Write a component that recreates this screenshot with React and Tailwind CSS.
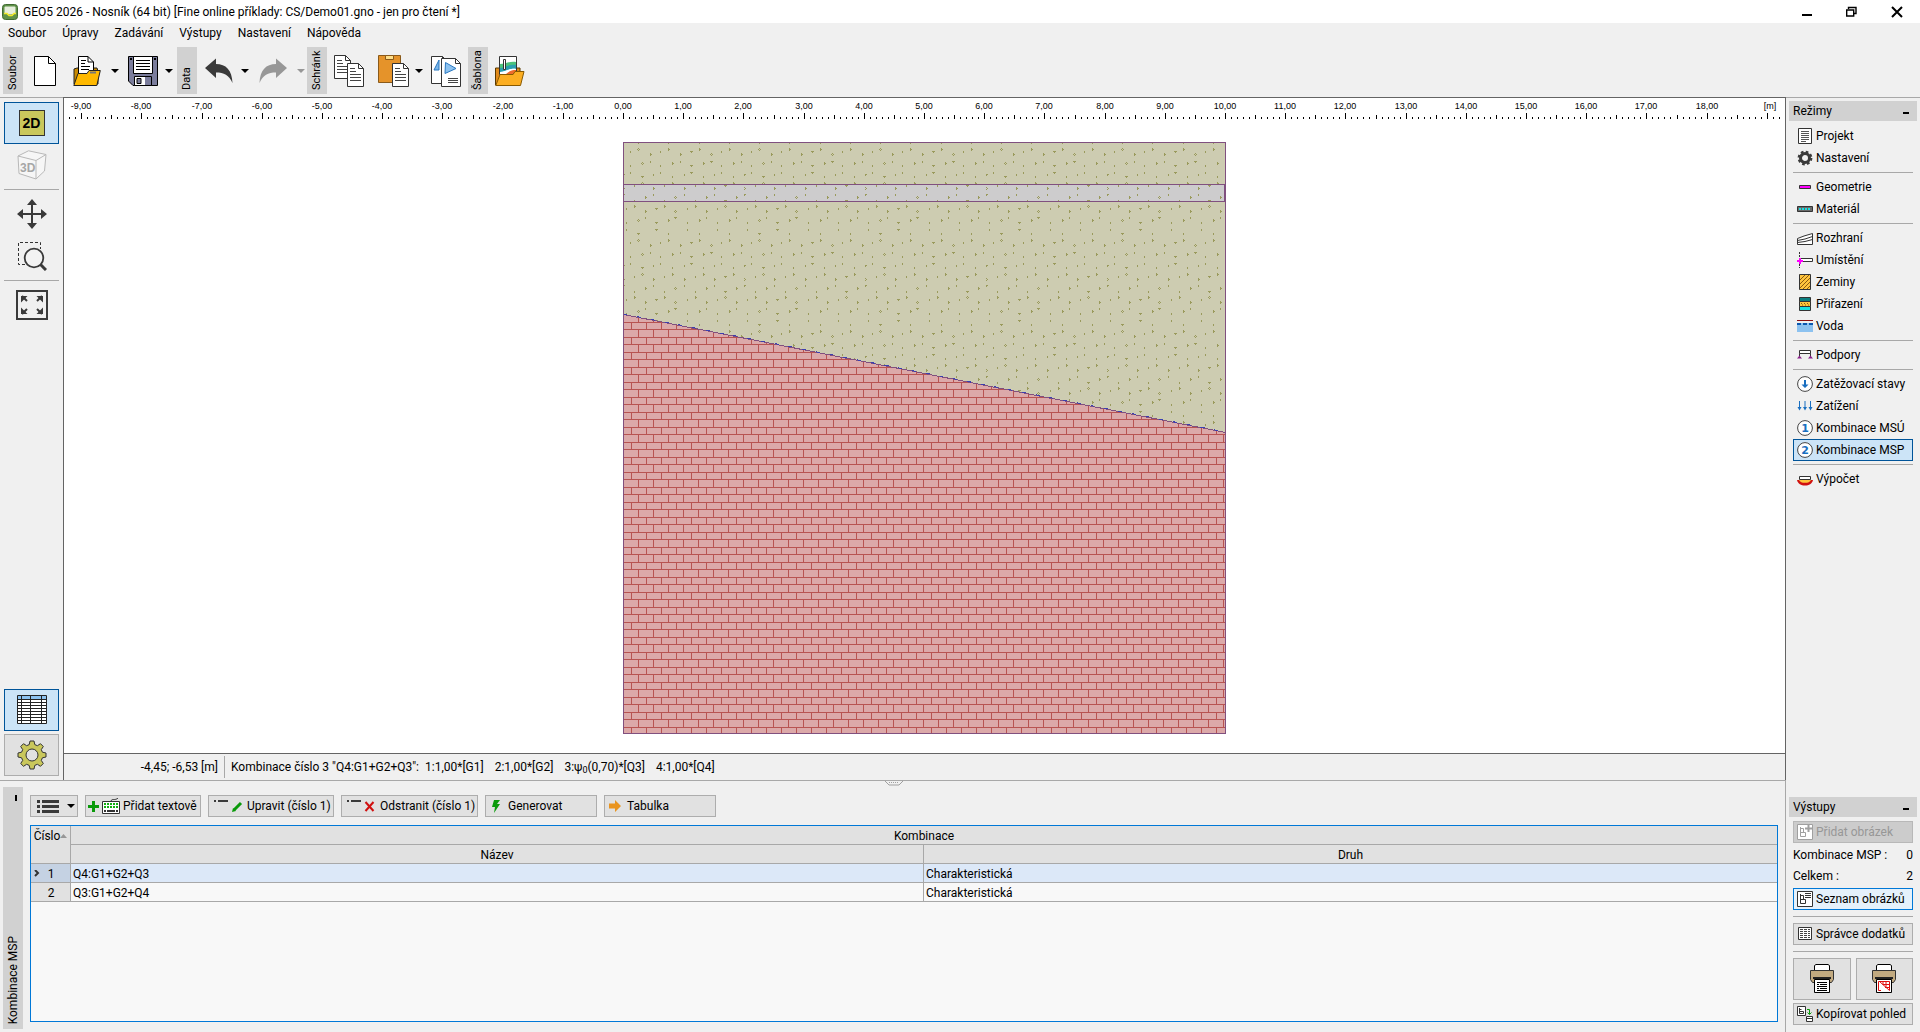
import { useState } from 'react';

const MENU = ['Soubor', 'Úpravy', 'Zadávání', 'Výstupy', 'Nastavení', 'Nápověda'];

// world origin and scale of the 2D view, in canvas pixels
const ORIGIN_X = 559;
const UNIT = 60.2;

// soil hatch, tile 121 x 91: [y, first x, x of the special mark, kind]
const SAND_ROWS = [
  [0, 15, 15, 'tick'], [7, 15, 15, 'stone'], [9, 7, 68, 'tick'], [12, 27, 87, 'stone'],
  [19, 27, 87, 'tick'], [21, 19, 19, 'stone'], [23, 7, 68, 'tick'], [30, 7, 68, 'tick'],
  [32, 0, 0, 'tick'], [34, 19, 19, 'tick'], [41, 19, 19, 'stone'], [43, 11, 102, 'tick'],
  [46, 0, 0, 'stone'], [52, 0, 0, 'tick'], [55, 22, 53, 'stone'], [58, 11, 102, 'tick'],
  [64, 11, 102, 'stone'], [66, 3, 34, 'tick'], [69, 22, 53, 'stone'], [75, 22, 53, 'tick'],
  [78, 15, 15, 'stone'], [80, 3, 34, 'tick'], [87, 3, 34, 'tick'],
];

function sandMark(x, y, kind, special) {
  const px = (dx, dy, w, h) => `M${x + dx} ${y + dy}h${w}v${h}h${-w}z`;
  if (kind === 'tick') {
    return special ? px(-1, 0, 3, 1) + px(0, 1, 1, 1) : px(0, 0, 1, 2);
  }
  return special
    ? px(0, -1, 1, 1) + px(-1, 0, 1, 1) + px(1, 0, 1, 1) + px(0, 1, 1, 1)
    : px(0, -1, 1, 3) + px(1, 0, 1, 1);
}

const SAND_PATH = SAND_ROWS.map(([y, first, specialX, kind]) =>
  [0, 30, 61, 91]
    .map((step) => {
      const x = first + step;
      return sandMark(x, y, kind, Math.abs(x - specialX) < 3);
    })
    .join('')
).join('');

function Icon({ w, h, children, className = '' }) {
  return (
    <svg width={w} height={h} viewBox={`0 0 ${w} ${h}`} fill="none" className={`shrink-0 ${className}`} aria-hidden="true">
      {children}
    </svg>
  );
}

function Page({ x = 0, y = 0, w = 16, h = 23, lines = true }) {
  const f = 5.5;
  return (
    <g transform={`translate(${x} ${y})`}>
      <path d={`M.5 .5H${w - f}L${w - 0.5} ${f}V${h - 0.5}H.5z`} fill="#fff" stroke="#333" />
      <path d={`M${w - f} .5V${f}H${w - 0.5}`} stroke="#333" />
      {lines && <path d={`M3 5.5h5M3 8.5h6M3 11.5h${w - 6}M3 14.5h${w - 6}M3 17.5h${w - 6}`} stroke="#444" />}
    </g>
  );
}

function NewIcon() {
  return (
    <Icon w={22} h={32}>
      <path d="M.5 1.500H14.500L21.500 8.500V30.500H.5z" fill="#fff" stroke="#000" />
      <path d="M14.500 1.500V8.500H21.500" stroke="#000" />
    </Icon>
  );
}

function OpenIcon() {
  return (
    <Icon w={28} h={32}>
      <path d="M1 29V14l3-1h20l1 3v13z" fill="#c98a00" stroke="#222" />
      <path d="M5.500 20V1.500H15L20.500 7V20z" fill="#fff" stroke="#000" />
      <path d="M15 1.500V7h5.500M8 5.500h5M8 8.500h4M8 11.500h9M8 14.500h8" stroke="#000" />
      <path d="M.8 30.500L5 18.500h9l2-3h11.300l-3.500 15z" fill="#ffb900" stroke="#222" />
      <path d="M17 17.500h6" stroke="#777" strokeWidth="2" />
    </Icon>
  );
}

function SaveIcon() {
  return (
    <Icon w={30} h={32}>
      <path d="M.5 1.500h29v29H5L.5 26z" fill="#7b7d9c" stroke="#000" />
      <path d="M5.500 1.500h19v17h-19z" fill="#fff" stroke="#000" />
      <path d="M8 5.500h14M8 8.500h14M8 11.500h14M8 14.500h14" stroke="#000" />
      <path d="M6.500 21.500h17v9h-17z" fill="#fff" stroke="#000" />
      <path d="M9 23.500h4v5H9z" fill="#7b7d9c" stroke="#000" />
      <path d="M17 22h6v8h-6z" fill="#7b7d9c" />
      <path d="M2 3h2v2H2zM26 3h2v2h-2z" fill="#000" />
    </Icon>
  );
}

function UndoIcon({ color = '#3a3a3a', flip }) {
  return (
    <Icon w={28} h={28}>
      <path
        d="M0 11L11 1.500V7C21 7 27 13 27.500 26C24 18 19 15.500 11 15.500V21z"
        fill={color}
        transform={flip ? 'matrix(-1 0 0 1 28 0)' : undefined}
      />
    </Icon>
  );
}

function CopyIcon() {
  return (
    <Icon w={31} h={34}>
      <Page x={0} y={1} w={17} h={24} />
      <Page x={13} y={9} w={17} h={24} />
    </Icon>
  );
}

function PasteIcon() {
  return (
    <Icon w={31} h={34}>
      <path d="M.5 1.500h22v27H.5z" fill="#e5932a" stroke="#8a5a1a" />
      <path d="M7.500 1.500h8v4h-8z" fill="#ffe08a" stroke="#8a5a1a" />
      <Page x={14} y={9} w={17} h={24} />
    </Icon>
  );
}

function CopyDrawingIcon() {
  return (
    <Icon w={31} h={34}>
      <Page x={0} y={2} w={17} h={28} lines={false} />
      <path d="M8 6L3 16h5z" fill="#7ab6ea" stroke="#2a78c0" />
      <Page x={10} y={4} w={20} h={29} lines={false} />
      <path d="M14.500 8.500L25 14.500l-11 5z" fill="#8cc2f0" stroke="#2a78c0" />
      <path d="M17 24.500h10M17 26.500h10M17 28.500h10" stroke="#444" />
    </Icon>
  );
}

function TemplateIcon() {
  return (
    <Icon w={30} h={34}>
      <path d="M.5 31V14h5V31zM20 14h5v8h-5z" fill="#e08a1a" stroke="#5a3a00" />
      <path d="M4.500 2.500h17v18h-17z" fill="#fff" stroke="#333" />
      <path d="M5 10c6 0 9-3 16-2v4c-6-1-9 3-16 3z" fill="#4cc27c" />
      <path d="M5 14c5 0 9-4 16-3v4c-6-1-10 3-16 3z" fill="#2a9fb0" />
      <path d="M5 18c5 0 9-4 16-3v2c-6-1-10 2-16 3z" fill="#fff" />
      <path d="M11 20c3-3 6-4 10-4v4z" fill="#ee6a2c" />
      <path d="M8.500 5.500h2v10h-2z" fill="#fff" stroke="#333" />
      <path d="M.8 31.500L5 20.500h13l2-3h9l-3.500 14z" fill="#fcae22" stroke="#8a5a00" />
    </Icon>
  );
}

function Caret({ color = '#000' }) {
  return (
    <Icon w={8} h={4}>
      <path d="M0 0H8L4 4z" fill={color} />
    </Icon>
  );
}

function GroupLabel({ children }) {
  return (
    <div className="h-[47px] w-5 shrink-0 bg-[#d1d1d1]">
      <span className="flex h-full w-5 rotate-180 items-center whitespace-nowrap pt-1 text-[11px] [writing-mode:vertical-rl]">
        <span className="w-5 leading-5">{children}</span>
      </span>
    </div>
  );
}

function ToolButton({ label, children, className = '' }) {
  return (
    <button type="button" aria-label={label} className={`flex h-[47px] shrink-0 items-center justify-center ${className}`}>
      {children}
    </button>
  );
}

function TitleBar() {
  return (
    <header className="flex h-[23px] items-center bg-white">
      <Icon w={16} h={16} className="ml-[2px] mr-[5px]">
        <rect x=".5" y=".5" width="15" height="15" rx="3" fill="#5f9148" stroke="#3f6b30" />
        <path d="M2.500 3.500q0-1 1-1h9q1 0 1 1V9q-5 3-11 0z" fill="#e6eedc" />
        <path d="M2 9.500h3l2 2h3l2-2h2" stroke="#f2ea2a" strokeWidth="1.500" />
      </Icon>
      <h1 className="flex-1">GEO5 2026 - Nosník (64 bit) [Fine online příklady: CS/Demo01.gno - jen pro čtení *]</h1>
      <button type="button" aria-label="Minimalizovat" className="flex h-full w-[45px] items-center justify-center">
        <Icon w={10} h={11}>
          <path d="M0 9h10" stroke="#000" strokeWidth="2" />
        </Icon>
      </button>
      <button type="button" aria-label="Obnovit" className="flex h-full w-[45px] items-center justify-center">
        <Icon w={11} h={11}>
          <path d="M2.500 3V1.500h7.500v6H8" stroke="#000" strokeWidth="1.400" />
          <path d="M.7 4h7v6h-7z" stroke="#000" strokeWidth="1.400" />
        </Icon>
      </button>
      <button type="button" aria-label="Zavřít" className="flex h-full w-[46px] items-center justify-center">
        <Icon w={12} h={12}>
          <path d="M1 1l10 10M11 1L1 11" stroke="#000" strokeWidth="2" />
        </Icon>
      </button>
    </header>
  );
}

function Toolbar() {
  return (
    <div className="flex items-center pb-[3px] pl-[3px]">
      <GroupLabel>Soubor</GroupLabel>
      <ToolButton label="Nový" className="w-11"><NewIcon /></ToolButton>
      <ToolButton label="Otevřít" className="w-10"><OpenIcon /></ToolButton>
      <ToolButton label="Další možnosti otevření" className="w-4"><Caret /></ToolButton>
      <ToolButton label="Uložit" className="w-10"><SaveIcon /></ToolButton>
      <ToolButton label="Další možnosti uložení" className="mr-[2px] w-3"><Caret /></ToolButton>
      <GroupLabel>Data</GroupLabel>
      <ToolButton label="Zpět" className="w-11"><UndoIcon /></ToolButton>
      <ToolButton label="Seznam kroků zpět" className="w-2"><Caret /></ToolButton>
      <ToolButton label="Znovu" className="w-12"><UndoIcon color="#979797" flip /></ToolButton>
      <ToolButton label="Seznam kroků znovu" className="mr-[2px] w-2"><Caret color="#979797" /></ToolButton>
      <GroupLabel>Schránk</GroupLabel>
      <ToolButton label="Kopírovat" className="w-11"><CopyIcon /></ToolButton>
      <ToolButton label="Vložit" className="w-11"><PasteIcon /></ToolButton>
      <ToolButton label="Další možnosti vložení" className="w-2"><Caret /></ToolButton>
      <ToolButton label="Kopírovat výkres" className="w-[45px] pl-px"><CopyDrawingIcon /></ToolButton>
      <GroupLabel>Šablona</GroupLabel>
      <ToolButton label="Otevřít šablonu" className="w-11"><TemplateIcon /></ToolButton>
    </div>
  );
}

const GEAR_8 =
  'M13 1h4l.8 3.600 2.600 1.100 3.100-2 2.800 2.800-2 3.100 1.100 2.600 3.600.8v4l-3.600.8-1.100 2.600 2 3.100-2.800 2.800-3.100-2-2.600 1.100-.8 3.600h-4l-.8-3.600-2.600-1.100-3.100 2-2.800-2.800 2-3.100-1.100-2.600L1 17v-4l3.600-.8 1.100-2.600-2-3.100 2.800-2.800 3.100 2 2.600-1.100z';

function SideTools({ tableShown, onToggleTable }) {
  return (
    <div className="flex w-[63px] shrink-0 flex-col border-t border-[#a8a8a8] px-1 pb-1 pt-1">
      <button type="button" aria-label="2D" aria-pressed="true" className="flex h-[42px] items-center justify-center border border-[#005499] bg-[#cce4f7]">
        <span className="flex size-[26px] items-center justify-center border border-[#333] bg-[#c9c75c] font-['Liberation_Sans',sans-serif] text-[14px] font-bold">2D</span>
      </button>
      <button type="button" aria-label="3D" disabled className="flex h-[42px] items-center justify-center">
        <Icon w={30} h={30}>
          <path d="M1 6L11.500 .8 29 4.500 27.500 21 19 29 2 23.500z" fill="#f6f6f6" stroke="#b8b8b8" />
          <path d="M1 6l18 4.500L29 4.500M19 10.500V29" stroke="#b8b8b8" />
          <text x="3" y="21.500" fontSize="12" fontWeight="bold" fill="#a6a6a6" fontFamily="Liberation Sans, sans-serif">3D</text>
        </Icon>
      </button>
      <hr className="my-[3px] border-[#a8a8a8]" />
      <button type="button" aria-label="Posun" className="flex h-[42px] items-center justify-center">
        <Icon w={30} h={30}>
          <path d="M15 5v20M5 15h20" stroke="#3a3a3a" strokeWidth="2" />
          <path d="M15 0l5 6H10zM15 30l5-6H10zM0 15l6-5v10zM30 15l-6-5v10z" fill="#3a3a3a" />
        </Icon>
      </button>
      <button type="button" aria-label="Zvětšení oblasti" className="flex h-[42px] items-center justify-center">
        <Icon w={30} h={30}>
          <path d="M8 23.500H1.500v-22h22V8" stroke="#333" strokeDasharray="3 2" />
          <circle cx="17" cy="17" r="9.300" fill="#f3f3f3" stroke="#3a3a3a" strokeWidth="1.800" />
          <path d="M23.500 23.500l5.500 5.500" stroke="#3a3a3a" strokeWidth="3" />
        </Icon>
      </button>
      <hr className="my-[3px] border-[#a8a8a8]" />
      <button type="button" aria-label="Zobrazit vše" className="flex h-[42px] items-center justify-center">
        <Icon w={32} h={30}>
          <path d="M1 1h30v28H1z" stroke="#3a3a3a" strokeWidth="2" />
          <path d="M6 6l5 5M26 6l-5 5M6 24l5-5M26 24l-5-5" stroke="#3a3a3a" strokeWidth="2" />
          <path d="M5 6h6.500L5 12.500zM27 6h-6.500l6.500 6.500zM5 24h6.500L5 17.500zM27 24h-6.500l6.500-6.500z" fill="#3a3a3a" />
        </Icon>
      </button>
      <div className="flex-1" />
      <button
        type="button"
        aria-label="Tabulka"
        aria-pressed={tableShown}
        onClick={onToggleTable}
        className="mb-[3px] flex h-[42px] items-center justify-center border border-[#005499] bg-[#cce4f7]"
      >
        <Icon w={30} h={30}>
          <path d="M.5 .5h29v28H.5z" fill="#fff" stroke="#222" />
          <path d="M1 1h28v3H1z" fill="#8cc2f0" />
          <path d="M0 4.500h30M0 7.500h30M0 10.500h30M0 13.500h30M0 16.500h30M0 19.500h30M0 22.500h30M0 25.500h30M4.500 0v29M13.500 0v29M24.500 0v29" stroke="#222" />
        </Icon>
      </button>
      <button type="button" aria-label="Nastavení zobrazení" className="flex h-[42px] items-center justify-center border border-[#adadad] bg-[#e1e1e1]">
        <Icon w={30} h={30}>
          <path d={GEAR_8} fill="#c9c75c" stroke="#333" strokeLinejoin="round" />
          <circle cx="15" cy="15" r="6" fill="#e1e1e1" stroke="#333" />
        </Icon>
      </button>
    </div>
  );
}

function Ruler() {
  const ticks = [];
  for (let i = -92; i <= 192; i++) {
    const len = i % 10 === 0 ? 6 : i % 5 === 0 ? 4 : 2;
    ticks.push(`M${Math.round(ORIGIN_X + (i * UNIT) / 10) + 0.5} 21v-${len}`);
  }
  const labels = [];
  for (let i = -9; i <= 18; i++) labels.push(i);
  return (
    <g>
      <path d={ticks.join('')} stroke="#000" />
      <g fontFamily="Liberation Sans, sans-serif" fontSize="9" textAnchor="middle" fill="#000">
        {labels.map((n) => (
          <text key={n} x={Math.round(ORIGIN_X + n * UNIT)} y="11">{`${n},00`}</text>
        ))}
        <text x={Math.round(ORIGIN_X + 19 * UNIT) + 3} y="11">[m]</text>
      </g>
    </g>
  );
}

function Canvas() {
  return (
    <svg className="min-h-0 w-full flex-1 bg-white" aria-label="2D pohled">
      <defs>
        <pattern id="sand" x="559" y="44" width="121" height="91" patternUnits="userSpaceOnUse">
          <path d={SAND_PATH} fill="#9a9a5c" shapeRendering="crispEdges" />
        </pattern>
        <pattern id="bricks" x="567" y="224" width="15" height="15" patternUnits="userSpaceOnUse">
          <path d="M0 .5H15M0 7.500H15M.5 1V7M7.500 8V15" stroke="#b85452" shapeRendering="crispEdges" />
        </pattern>
      </defs>
      <Ruler />
      <g shapeRendering="crispEdges">
        <path d="M559 44H1162V335L559 216z" fill="#cdccb1" />
        <path d="M559 86h602v17H559z" fill="#cdcccd" />
        <path d="M559 44H1162V335L559 216z" fill="url(#sand)" />
        <path d="M559 216L1162 335V636H559z" fill="#dca9a9" />
        <path d="M559 216L1162 335V636H559z" fill="url(#bricks)" />
        <path d="M559.500 216.500L1161.500 334.500" stroke="#80507f" />
        <path d="M559.500 216L1161.500 334" stroke="#3b3fb0" strokeDasharray="4 10" />
        <path d="M559.500 86.500h601v17h-601zM559.500 44.500h602v591h-602z" stroke="#80507f" fill="none" />
      </g>
    </svg>
  );
}

function StatusBar() {
  return (
    <div className="flex h-[27px] items-center border-t border-[#646464]">
      <span className="w-[154px] text-right">-4,45; -6,53 [m]</span>
      <span className="mx-[6px] h-[22px] w-px bg-[#a8a8a8]" />
      <span className="flex gap-[11px]">
        <span>Kombinace číslo 3 "Q4:G1+G2+Q3":&nbsp; 1:1,00*[G1]</span>
        <span>2:1,00*[G2]</span>
        <span>3:ψ<sub className="text-[9px]">0</sub>(0,70)*[Q3]</span>
        <span>4:1,00*[Q4]</span>
      </span>
    </div>
  );
}

function PanelButton({ icon, children, className = '' }) {
  return (
    <button type="button" className={`flex h-[22px] items-center whitespace-nowrap border border-[#adadad] bg-[#e1e1e1] ${className}`}>
      {icon}
      {children}
    </button>
  );
}

const ROWS = [
  { id: 1, name: 'Q4:G1+G2+Q3', kind: 'Charakteristická' },
  { id: 2, name: 'Q3:G1+G2+Q4', kind: 'Charakteristická' },
];

function CombinationTable() {
  const [active, setActive] = useState(1);
  const cell = 'h-[19px] border-b border-[#a8a8a8] p-0 pt-[2px] font-normal leading-4';
  return (
    <div className="mr-[7px] min-h-0 flex-1 border border-[#0078d7] bg-[#f8f8f8]">
      <table className="w-full table-fixed border-separate border-spacing-0">
        <colgroup>
          <col className="w-10" />
          <col />
          <col />
        </colgroup>
        <thead className="bg-[#e1e1e1]">
          <tr>
            <th rowSpan={2} className={`${cell} border-r align-top`}>
              <span className="flex items-center justify-center">
                Číslo
                <Icon w={7} h={4}>
                  <path d="M0 4h7L3.500 0z" fill="#979797" />
                </Icon>
              </span>
            </th>
            <th colSpan={2} className={cell}>Kombinace</th>
          </tr>
          <tr>
            <th className={`${cell} border-r`}>Název</th>
            <th className={cell}>Druh</th>
          </tr>
        </thead>
        <tbody>
          {ROWS.map((row) => (
            <tr key={row.id} onClick={() => setActive(row.id)} className={row.id === active ? 'bg-[#dce8f8]' : ''}>
              <td className={`${cell} border-r ${row.id === active ? 'bg-[#c5d2e3]' : 'bg-[#e1e1e1]'}`}>
                <span className="flex items-center">
                  <span className="flex w-[9px] justify-end">
                    {row.id === active && (
                      <Icon w={6} h={8}>
                        <path d="M1 0l3 3-3 3" stroke="#333" strokeWidth="2" />
                      </Icon>
                    )}
                  </span>
                  <span className="w-[22px] text-center">{row.id}</span>
                </span>
              </td>
              <td className={`${cell} border-r pl-[2px]`}>{row.name}</td>
              <td className={`${cell} pl-[2px]`}>{row.kind}</td>
            </tr>
          ))}
        </tbody>
      </table>
    </div>
  );
}

function BottomPanel() {
  return (
    <section className="relative flex h-[252px] shrink-0 border-r border-t border-[#a8a8a8] pb-[3px] pl-[3px] pt-[6px]">
      <Icon w={18} h={5} className="absolute left-1/2 top-0 -ml-2">
        <path d="M0 0l4 4h10l4-4" stroke="#a0a0a0" />
        <path d="M4 1.500h10" stroke="#a0a0a0" strokeDasharray="1 1" />
      </Icon>
      <div className="flex w-5 shrink-0 flex-col items-center justify-between bg-[#d1d1d1] pb-[5px] pt-2">
        <button type="button" aria-label="Skrýt panel" className="flex w-5 justify-center pl-[5px]">
          <Icon w={2} h={6}>
            <path d="M0 0h2v6H0z" fill="#000" />
          </Icon>
        </button>
        <h2 className="w-5 rotate-180 leading-5 [writing-mode:vertical-rl]">Kombinace MSP</h2>
      </div>
      <div className="flex min-w-0 flex-1 flex-col pb-[7px] pl-[7px] pt-2">
        <div className="mb-2 flex gap-[7px]">
          <button type="button" aria-label="Zobrazení seznamu" className="flex h-[22px] w-12 items-center justify-end gap-2 border border-[#adadad] bg-[#e1e1e1] pr-[2px]">
            <Icon w={22} h={13}>
              <path d="M0 1.500h3M0 6.500h3M0 11.500h3M5 1.500h17M5 6.500h17M5 11.500h17" stroke="#3a3a3a" strokeWidth="3" />
            </Icon>
            <Caret />
          </button>
          <PanelButton
            className="w-[116px] gap-[3px] pl-[2px]"
            icon={
              <>
                <Icon w={11} h={11}>
                  <path d="M5.500 0v11M0 5.500h11" stroke="#0a9a0a" strokeWidth="3" />
                </Icon>
                <Icon w={18} h={16}>
                  <path d="M9 3c1-3 4 0 7-3" stroke="#333" />
                  <path d="M.5 3.500h17v12H.5z" fill="#fff" stroke="#333" />
                  <path d="M2 6h14M2 9h14" stroke="#13b013" strokeWidth="2" strokeDasharray="2 1" />
                  <path d="M2 13h14" stroke="#333" strokeWidth="2" strokeDasharray="2 1 8 1" />
                </Icon>
              </>
            }
          >
            Přidat textově
          </PanelButton>
          <PanelButton
            className="w-[126px] gap-1 pl-[5px]"
            icon={
              <Icon w={29} h={14}>
                <path d="M0 2h2M4 2h10" stroke="#3a3a3a" strokeWidth="2" />
                <path d="M20 11L27 4" stroke="#0a9a0a" strokeWidth="3" />
                <path d="M18 13l1-4 3 3z" fill="#0a9a0a" />
              </Icon>
            }
          >
            Upravit (číslo 1)
          </PanelButton>
          <PanelButton
            className="w-[137px] gap-1 pl-[5px]"
            icon={
              <Icon w={29} h={14}>
                <path d="M0 2h2M4 2h10" stroke="#3a3a3a" strokeWidth="2" />
                <path d="M18.500 3l8 9M26.500 3l-8 9" stroke="#d01010" strokeWidth="2" />
              </Icon>
            }
          >
            Odstranit (číslo 1)
          </PanelButton>
          <PanelButton
            className="w-28 gap-2 pl-[6px]"
            icon={
              <Icon w={8} h={13}>
                <path d="M2 0h6L5 4h3L2 13l1-6H0z" fill="#0a9a0a" />
              </Icon>
            }
          >
            Generovat
          </PanelButton>
          <PanelButton
            className="w-28 gap-[6px] pl-1"
            icon={
              <Icon w={12} h={12}>
                <path d="M0 3.500h6V0l6 6-6 6V8.500H0z" fill="#e9941f" />
              </Icon>
            }
          >
            Tabulka
          </PanelButton>
        </div>
        <CombinationTable />
      </div>
    </section>
  );
}

const numbered = (content) => (
  <>
    <circle cx="8" cy="8" r="7.400" fill="#fff" stroke="#444" />
    {content}
  </>
);

const MODES = [
  [
    {
      label: 'Projekt',
      icon: (
        <>
          <path d="M1.500 .5h13v15h-13z" fill="#fff" stroke="#333" />
          <path d="M4 3.500h8M4 5.500h8M4 7.500h8M4 9.500h8M4 11.500h8M4 13.500h5" stroke="#555" />
        </>
      ),
    },
    {
      label: 'Nastavení',
      icon: (
        <>
          <circle cx="8" cy="8" r="4.500" stroke="#3a3a3a" strokeWidth="3" />
          <circle cx="8" cy="8" r="6.200" stroke="#3a3a3a" strokeWidth="2.400" strokeDasharray="2.600 2.270" />
        </>
      ),
    },
  ],
  [
    { label: 'Geometrie', icon: <path d="M2.500 6.500h11v3h-11z" fill="#f0f" stroke="#333" /> },
    {
      label: 'Materiál',
      icon: (
        <>
          <path d="M.5 5.500h15v5H.5z" fill="#6a6a6a" stroke="#333" />
          <path d="M2 8h12" stroke="#19e0e0" strokeWidth="2" strokeDasharray="2 1" />
        </>
      ),
    },
  ],
  [
    {
      label: 'Rozhraní',
      icon: (
        <>
          <path d="M.5 14.500V8.500L7 6l8.500-2.500v11z" fill="#fff" stroke="#333" />
          <path d="M.5 10.500L8 9l7.500-2.500M.5 12.500L8 11.500l7.500-2" stroke="#333" />
        </>
      ),
    },
    {
      label: 'Umístění',
      icon: (
        <>
          <path d="M2.500 0v5M2.500 12v4" stroke="#333" strokeDasharray="2 1" />
          <path d="M4 6.500h11.500v3H6" fill="#fff" stroke="#333" />
          <path d="M3 6v6M0 9h6" stroke="#f0f" strokeWidth="2" />
        </>
      ),
    },
    {
      label: 'Zeminy',
      icon: (
        <>
          <path d="M2.500 .5h11v15h-11z" fill="#ffc53d" stroke="#333" />
          <path d="M3 6l5-5M3 10l9-9M3 14l10-10M6 15l7-7M10 15l3-3" stroke="#8a5a10" />
        </>
      ),
    },
    {
      label: 'Přiřazení',
      icon: (
        <>
          <path d="M2.500 1.500h11v4h-11z" fill="#0c7f80" stroke="#333" />
          <path d="M2.500 5.500h11v5h-11z" fill="#ffc53d" stroke="#333" />
          <path d="M2.500 10.500h11v4h-11z" fill="#17e0e0" stroke="#333" />
          <path d="M4 7.500h8M5 9h8" stroke="#8a5a10" strokeDasharray="1 2" />
        </>
      ),
    },
    {
      label: 'Voda',
      icon: (
        <>
          <path d="M0 5h16v9H0z" fill="#8cc2f0" />
          <path d="M0 2.500h16" stroke="#8a1010" />
          <path d="M0 6h16" stroke="#0a58b0" strokeWidth="2" strokeDasharray="4 2" />
        </>
      ),
    },
  ],
  [
    {
      label: 'Podpory',
      icon: (
        <>
          <path d="M2.500 3.500h11v3h-11z" fill="#fff" stroke="#333" />
          <path d="M2.500 6.500v3M13.500 6.500v3" stroke="#333" />
          <path d="M0 11.500l2.500-3 2.500 3zM11 11.500l2.500-3 2.500 3z" fill="#8a208a" />
        </>
      ),
    },
  ],
  [
    {
      label: 'Zatěžovací stavy',
      icon: numbered(<path d="M7 4h2v4.500h2.500L8 12 4.500 8.500H7z" fill="#1a6fc0" />),
    },
    {
      label: 'Zatížení',
      icon: (
        <>
          <path d="M2.500 3v8M8 3v8M13.500 3v8" stroke="#1a6fc0" />
          <path d="M.5 9h4L2.500 12.500zM6 9h4L8 12.500zM11.500 9h4l-2 3.500z" fill="#1a6fc0" />
        </>
      ),
    },
    {
      label: 'Kombinace MSÚ',
      icon: numbered(
        <text x="8" y="12" fontSize="11" fontWeight="bold" textAnchor="middle" fill="#1a6fc0" fontFamily="DejaVu Sans, sans-serif">1</text>
      ),
    },
    {
      label: 'Kombinace MSP',
      icon: numbered(
        <text x="8" y="12" fontSize="11" fontWeight="bold" textAnchor="middle" fill="#1a6fc0" fontFamily="DejaVu Sans, sans-serif">2</text>
      ),
    },
  ],
  [
    {
      label: 'Výpočet',
      icon: (
        <>
          <path d="M2.500 5.500h11v3h-11z" fill="#fff" stroke="#333" />
          <path d="M0 9h16c-1 4-4 5.500-8 5.500S1 13 0 9z" fill="#d01010" />
          <path d="M2 9h12c-1 2-3 2.800-6 2.800S3 11 2 9z" fill="#ffc53d" />
        </>
      ),
    },
  ],
];

function PanelHeader({ children }) {
  return (
    <div className="flex h-5 items-center justify-between bg-[#d1d1d1] pl-1 pr-2">
      <h2>{children}</h2>
      <button type="button" aria-label={`Skrýt ${children}`} className="pt-1">
        <Icon w={6} h={2}>
          <path d="M0 0h6v2H0z" fill="#000" />
        </Icon>
      </button>
    </div>
  );
}

function PictureIcon({ color = '#333', children }) {
  return (
    <Icon w={16} h={16} className="mx-[3px]">
      <path d="M.5 .5h15v15H.5z" fill="#fff" stroke={color} />
      <path d="M3.500 3v9.500h5v-4h-5M3.500 4.500h3v4" stroke={color} />
      {children}
    </Icon>
  );
}

function Printer({ pdf }) {
  return (
    <Icon w={24} h={30}>
      <path d="M4.500 7V1.500L6 .5h12l1.500 1V7z" fill="#fff" stroke="#000" />
      <path d="M.5 6.500h23v9l-2 3h-19l-2-3z" fill="#c2aa80" stroke="#333" />
      <path d="M3 13h18v2H3z" fill="#222" />
      <path d="M4.500 15.500h15v13h-15z" fill="#fff" stroke="#000" />
      {pdf ? (
        <path d="M9 17.500H6.500v9H9M7.500 17.500h10v9zM11 18v3M14 18v6M11 20.500h6M13 23.500h4" stroke="#e01010" />
      ) : (
        <path d="M7 18.500h10M7 20.500h2M10 20.500h7M7 22.500h10M7 24.500h2M10 24.500h7M7 26.500h10" stroke="#000" />
      )}
    </Icon>
  );
}

function RightPanel() {
  const [mode, setMode] = useState('Kombinace MSP');
  return (
    <aside className="flex w-[134px] shrink-0 flex-col border-t border-[#a8a8a8] px-[3px] pt-[3px]">
      <PanelHeader>Režimy</PanelHeader>
      <nav className="px-1 pt-1">
        {MODES.map((group, i) => (
          <div key={group[0].label}>
            {i > 0 && <hr className="my-[3px] border-[#a8a8a8]" />}
            {group.map((item) => (
              <button
                key={item.label}
                type="button"
                onClick={() => setMode(item.label)}
                className={`flex h-[22px] w-full items-center gap-[3px] whitespace-nowrap border pl-[3px] ${
                  mode === item.label ? 'border-[#005499] bg-[#cce4f7]' : 'border-transparent'
                }`}
              >
                <Icon w={16} h={16}>{item.icon}</Icon>
                {item.label}
              </button>
            ))}
          </div>
        ))}
      </nav>
      <div className="flex-1" />
      <PanelHeader>Výstupy</PanelHeader>
      <div className="flex flex-col px-1 pb-[7px] pt-1">
        <button type="button" disabled className="flex h-[22px] items-center border border-[#b8b8b8] bg-[#cccccc] text-[#979797]">
          <PictureIcon color="#a0a0a0">
            <path d="M11.500 1v7M8 4.500h7" stroke="#a0a0a0" strokeWidth="2" />
          </PictureIcon>
          Přidat obrázek
        </button>
        <dl className="grid grid-cols-[1fr_auto] pb-px pt-[2px] leading-[21px]">
          <dt>Kombinace MSP :</dt>
          <dd>0</dd>
          <dt>Celkem :</dt>
          <dd>2</dd>
        </dl>
        <button type="button" className="flex h-[22px] items-center whitespace-nowrap border border-[#0078d7] bg-[#e5f1fb]">
          <PictureIcon>
            <path d="M8 2.500h6M8 4.500h6M8 6.500h6" stroke="#333" />
          </PictureIcon>
          Seznam obrázků
        </button>
        <hr className="my-[6px] border-[#a8a8a8]" />
        <PanelButton
          icon={
            <Icon w={16} h={16} className="mx-[3px]">
              <path d="M1.500 1.500h13v12h-13z" fill="#fff" stroke="#333" />
              <path d="M3 3.500h10M3 5.500h10M3 7.500h10M3 9.500h10M3 11.500h10" stroke="#444" strokeDasharray="3 1" />
            </Icon>
          }
        >
          Správce dodatků
        </PanelButton>
        <hr className="my-[6px] border-[#a8a8a8]" />
        <div className="mb-[3px] flex gap-[5px]">
          <button type="button" aria-label="Tisk" className="flex h-[42px] flex-1 items-center justify-center border border-[#adadad] bg-[#e1e1e1]">
            <Printer />
          </button>
          <button type="button" aria-label="Tisk do PDF" className="flex h-[42px] flex-1 items-center justify-center border border-[#adadad] bg-[#e1e1e1]">
            <Printer pdf />
          </button>
        </div>
        <PanelButton
          icon={
            <Icon w={16} h={16} className="mx-[3px]">
              <path d="M.5 .5h8v9h-8z" fill="#fff" stroke="#333" />
              <path d="M2.500 2v5.500h4v-2h-4M2.500 3.500h2" stroke="#333" />
              <path d="M10 3.500h2.500V8M10.500 6.500l2 2 2-2" stroke="#0a9a0a" />
              <path d="M9.500 10.500h6v5h-6z" fill="#fff" stroke="#333" />
              <path d="M9.500 12.500h6" stroke="#333" />
            </Icon>
          }
        >
          Kopírovat pohled
        </PanelButton>
      </div>
    </aside>
  );
}

export default function App() {
  const [tableShown, setTableShown] = useState(true);
  return (
    <div className="flex h-screen flex-col overflow-hidden bg-[#f0f0f0] font-['Roboto','Open_Sans',sans-serif] text-[12px] leading-4 text-black">
      <TitleBar />
      <nav className="flex h-6 items-start gap-4 pl-2 pt-[2px]">
        {MENU.map((item) => (
          <button key={item} type="button">{item}</button>
        ))}
      </nav>
      <Toolbar />
      <div className="flex min-h-0 flex-1">
        <main className="flex min-w-0 flex-1 flex-col">
          <div className="flex min-h-0 flex-1">
            <SideTools tableShown={tableShown} onToggleTable={() => setTableShown(!tableShown)} />
            <div className="flex min-w-0 flex-1 flex-col border-x border-t border-[#646464]">
              <Canvas />
              <StatusBar />
            </div>
          </div>
          {tableShown && <BottomPanel />}
        </main>
        <RightPanel />
      </div>
    </div>
  );
}
